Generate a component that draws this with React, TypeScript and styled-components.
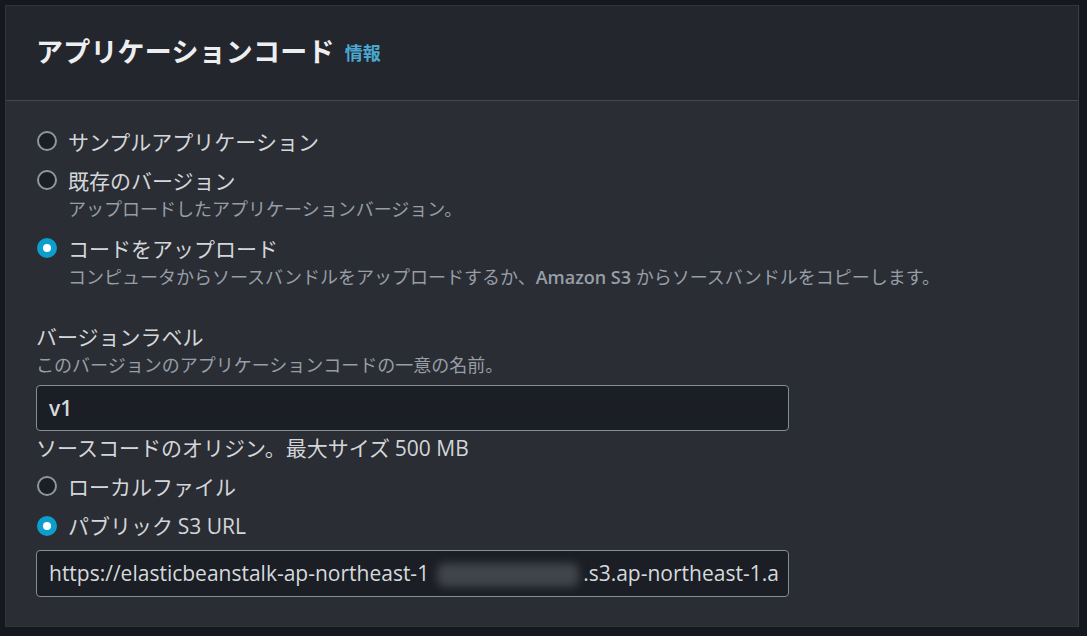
import React, { useState } from "react";
import styled, { createGlobalStyle } from "styled-components";

const GlobalStyle = createGlobalStyle`
  html, body {
    margin: 0;
    padding: 0;
    background: #15181e;
  }
  body {
    font-family: "Open Sans", "Noto Sans CJK JP", sans-serif;
  }
`;

const Page = styled.div`
  width: 1087px;
  height: 636px;
  padding: 5px 8px 9px 5px;
  box-sizing: border-box;
  background: #15181e;
`;

const Card = styled.section`
  height: 100%;
  display: flex;
  flex-direction: column;
  background: #2a2d33;
  border: 1px solid #30343b;
  border-right-color: #3a3e45;
  box-sizing: border-box;
`;

const Header = styled.header`
  height: 95px;
  flex-shrink: 0;
  display: flex;
  align-items: center;
  gap: 10px;
  padding: 0 30px 6px;
  background: #23262d;
  border-bottom: 1px solid #434851;
  box-sizing: border-box;
`;

const Title = styled.h2`
  margin: 0;
  font-family: "Noto Sans CJK JP", sans-serif;
  font-size: 27px;
  font-weight: 700;
  color: #eceef0;
  letter-spacing: 0.2px;
`;

const InfoLink = styled.a`
  font-family: "Noto Sans CJK JP", sans-serif;
  font-size: 18px;
  font-weight: 700;
  color: #4aa8d2;
  text-decoration: none;
  margin-top: 4px;
`;

const Body = styled.div`
  display: flex;
  flex-direction: column;
  padding: 25px 30px 30px;
`;

const RadioGroup = styled.div<{ $gap: number }>`
  display: flex;
  flex-direction: column;
  gap: ${(p) => p.$gap}px;
`;

const RadioItem = styled.label`
  display: grid;
  grid-template-columns: 20px 1fr;
  column-gap: 12px;
  align-items: center;
  cursor: pointer;
`;

const Circle = styled.span<{ $checked: boolean }>`
  width: 20px;
  height: 20px;
  border-radius: 50%;
  box-sizing: border-box;
  display: flex;
  align-items: center;
  justify-content: center;
  background: ${(p) => (p.$checked ? "#0c9fcd" : "#1b1e24")};
  border: 2px solid ${(p) => (p.$checked ? "#0c9fcd" : "#8e96a0")};
  margin-left: 1px;
  &::after {
    content: "";
    display: ${(p) => (p.$checked ? "block" : "none")};
    width: 8px;
    height: 8px;
    border-radius: 50%;
    background: #ffffff;
  }
`;

const Label = styled.span`
  font-family: "Noto Sans CJK JP", sans-serif;
  font-size: 21px;
  line-height: 30px;
  color: #d3d6da;
`;

const Description = styled.span<{ $after?: number }>`
  grid-column: 2;
  font-family: "Open Sans", "Noto Sans CJK JP", sans-serif;
  font-size: 18px;
  line-height: 28px;
  padding-bottom: ${(p) => p.$after ?? 0}px;
  color: #979ea8;
`;

const Field = styled.div<{ $top: number }>`
  display: flex;
  flex-direction: column;
  margin-top: ${(p) => p.$top}px;
`;

const FieldLabel = styled.div`
  font-family: "Noto Sans CJK JP", sans-serif;
  font-size: 21px;
  line-height: 30px;
  color: #d3d6da;
`;

const Latin = styled.span<{ $weight?: number }>`
  font-family: "Open Sans", sans-serif;
  font-weight: ${(p) => p.$weight ?? 600};
`;

const TextBox = styled.div<{ $top: number; $height: number; $bold?: boolean }>`
  width: 753px;
  height: ${(p) => p.$height}px;
  margin-top: ${(p) => p.$top}px;
  padding: 0 12px;
  box-sizing: border-box;
  overflow: hidden;
  white-space: nowrap;
  line-height: ${(p) => p.$height - 2}px;
  background: #1b1e24;
  border: 1px solid #858d98;
  border-radius: 4px;
  font-family: "Open Sans", sans-serif;
  font-size: 21px;
  font-weight: ${(p) => (p.$bold ? 600 : 400)};
  color: #d6d9dd;
`;

const Redacted = styled.span`
  display: inline-block;
  vertical-align: middle;
  width: 142px;
  height: 24px;
  margin: 0 4px 0 8px;
  border-radius: 8px;
  background: #40444b;
  filter: blur(4px);
`;

type Option = { id: string; label: React.ReactNode; desc?: React.ReactNode };

const sourceOptions: Option[] = [
  { id: "sample", label: "サンプルアプリケーション" },
  {
    id: "existing",
    label: "既存のバージョン",
    desc: "アップロードしたアプリケーションバージョン。",
  },
  {
    id: "upload",
    label: "コードをアップロード",
    desc: (
      <>
        コンピュータからソースバンドルをアップロードするか、<Latin>Amazon S3</Latin>{" "}
        からソースバンドルをコピーします。
      </>
    ),
  },
];

const originOptions: Option[] = [
  { id: "local", label: "ローカルファイル" },
  {
    id: "s3",
    label: (
      <>
        パブリック <Latin $weight={500}>S3 URL</Latin>
      </>
    ),
  },
];

function Radios({
  options,
  value,
  onChange,
  gap,
}: {
  options: Option[];
  value: string;
  onChange: (v: string) => void;
  gap: number;
}) {
  return (
    <RadioGroup $gap={gap}>
      {options.map((o) => (
        <RadioItem key={o.id} onClick={() => onChange(o.id)}>
          <Circle $checked={value === o.id} />
          <Label>{o.label}</Label>
          {o.desc && <Description $after={1}>{o.desc}</Description>}
        </RadioItem>
      ))}
    </RadioGroup>
  );
}

export default function App() {
  const [source, setSource] = useState("upload");
  const [origin, setOrigin] = useState("s3");

  return (
    <>
      <GlobalStyle />
      <Page>
        <Card>
          <Header>
            <Title>アプリケーションコード</Title>
            <InfoLink href="#">情報</InfoLink>
          </Header>
          <Body>
            <Radios options={sourceOptions} value={source} onChange={setSource} gap={9} />
            <Field $top={29}>
              <FieldLabel>バージョンラベル</FieldLabel>
              <Description>このバージョンのアプリケーションコードの一意の名前。</Description>
              <TextBox $top={6} $height={46} $bold>
                v1
              </TextBox>
            </Field>
            <Field $top={1}>
              <FieldLabel>
                ソースコードのオリジン。最大サイズ <Latin $weight={500}>500 MB</Latin>
              </FieldLabel>
            </Field>
            <Field $top={8}>
              <Radios options={originOptions} value={origin} onChange={setOrigin} gap={9} />
              <TextBox $top={9} $height={47}>
                https://elasticbeanstalk-ap-northeast-1
                <Redacted />
                .s3.ap-northeast-1.a
              </TextBox>
            </Field>
          </Body>
        </Card>
      </Page>
    </>
  );
}
